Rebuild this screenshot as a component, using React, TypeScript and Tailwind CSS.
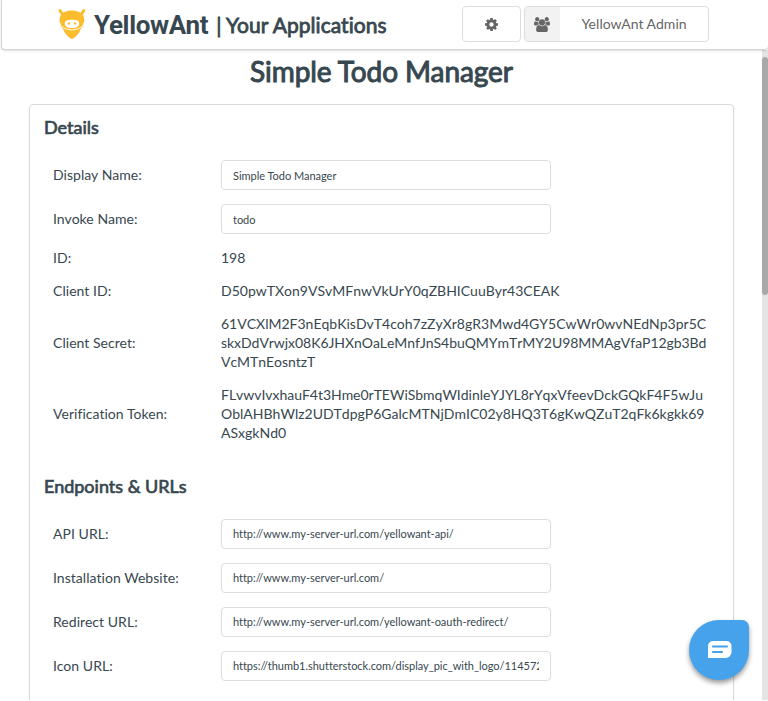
import type { ReactNode } from "react";

function AntLogo() {
  return (
    <svg className="h-[32px] w-[30px] shrink-0" viewBox="0 0 30 32">
      <g stroke="#fbbd2d" strokeLinecap="round">
        <path d="M2.900 2.400 L5.600 6.400" strokeWidth="2.800" />
        <path d="M26.900 2.400 L24.200 6.400" strokeWidth="2.800" />
      </g>
      <path
        d="M14.900 2.600c5.200 0 9.200 1.500 11.200 4.600 1.500 2.600 1.400 6.600.4 9.600-.6 1.700-1.500 2.900-2.600 3.700-1.300 4.500-4.300 7.700-7.600 9.900-.9.600-1.900.6-2.800 0-3.200-2.200-6.300-5.400-7.600-9.900-1.100-.8-2-2-2.600-3.700-1-3-1.100-7 .4-9.600 2-3.100 6-4.600 11.200-4.600z"
        fill="#fbbd2d"
      />
      <path d="M15 11.800c4.600 0 7.300.9 7.300 3.600 0 3-3.300 4.700-7.300 4.700s-7.300-1.700-7.300-4.700c0-2.700 2.700-3.600 7.300-3.600z" fill="#fff" />
      <circle cx="11.900" cy="15.400" r="1.200" fill="#fbbd2d" />
      <circle cx="18.100" cy="15.400" r="1.200" fill="#fbbd2d" />
      <path d="M2.800 14.500c1.600 9.800 22.600 9.800 24.200 0" fill="none" stroke="#fff" strokeWidth="0.900" />
    </svg>
  );
}

function CogIcon() {
  return (
    <svg className="size-[13px]" viewBox="0 -128 1536 1536" fill="currentColor">
      <path d="M1024 640q0-106-75-181t-181-75-181 75-75 181 75 181 181 75 181-75 75-181zm512-109v222q0 12-8 23t-20 13l-185 28q-19 54-39 91 35 50 107 138 10 12 10 25t-9 23q-27 37-99 108t-94 71q-12 0-26-9l-138-108q-44 23-91 38-16 136-29 186-7 28-36 28h-222q-14 0-24.500-8.500t-11.500-21.500l-28-184q-49-16-90-37l-141 107q-10 9-25 9-14 0-25-11-126-114-165-168-7-10-7-23 0-12 8-23 15-21 51-66.500t54-70.500q-27-50-41-99l-183-27q-13-2-21-12.500t-8-23.500v-222q0-12 8-23t19-13l186-28q14-46 39-92-40-57-107-138-10-12-10-24 0-10 9-23 26-36 98.500-107.500t94.500-71.500q13 0 26 10l138 107q44-23 91-38 16-136 29-186 7-28 36-28h222q14 0 24.500 8.500t11.500 21.500l28 184q49 16 90 37l142-107q9-9 24-9 13 0 25 10 129 119 165 170 7 8 7 22 0 12-8 23-15 21-51 66.500t-54 70.500q26 50 41 98l183 28q13 2 21 12.500t8 23.500z" />
    </svg>
  );
}

function UsersIcon() {
  return (
    <svg className="mr-[1px] h-[15px] w-[16px]" viewBox="0 0 1920 1792" fill="currentColor">
      <path d="M593 896q-162 5-265 128h-134q-82 0-138-40.500t-56-118.500q0-353 124-353 6 0 43.500 21t97.500 42.500 119 21.500q67 0 133-23-5 37-5 66 0 139 81 256zm1071 637q0 120-73 189.500t-194 69.500h-874q-121 0-194-69.500t-73-189.500q0-53 3.500-103.500t14-109 26.500-108.500 43-97.500 62-81 85.500-53.500 111.500-20q10 0 43 21.500t73 48 107 48 135 21.500 135-21.500 107-48 73-48 43-21.500q61 0 111.500 20t85.500 53.500 62 81 43 97.500 26.500 108.500 14 109 3.500 103.500zm-1024-1277q0 106-75 181t-181 75-181-75-75-181 75-181 181-75 181 75 75 181zm704 384q0 159-112.500 271.500t-271.500 112.500-271.500-112.500-112.500-271.500 112.500-271.500 271.500-112.500 271.500 112.500 112.500 271.500zm576 225q0 78-56 118.500t-138 40.500h-134q-103-123-265-128 81-117 81-256 0-29-5-66 66 23 133 23 59 0 119-21.500t97.500-42.500 43.500-21q124 0 124 353zm-128-609q0 106-75 181t-181 75-181-75-75-181 75-181 181-75 181 75 75 181z" />
    </svg>
  );
}

function Row({ label, children }: { label: string; children: ReactNode }) {
  return (
    <div className="flex items-center py-[7px] pl-[23px]">
      <div className="w-[168px] shrink-0 tracking-[0.04px]">{label}</div>
      <div className="min-w-0 [font-kerning:none] [font-variant-ligatures:none]">{children}</div>
    </div>
  );
}

function Field({ label, value, inputClass = "" }: { label: string; value: string; inputClass?: string }) {
  return (
    <div className="flex h-[44px] items-center pl-[23px]">
      <div className="w-[168px] shrink-0 pb-[2px] tracking-[0.04px]">{label}</div>
      <input
        readOnly
        aria-label={label}
        defaultValue={value}
        className={`block h-[30px] w-[330px] rounded-[4px] border border-[#dcddde] bg-white px-[11px] text-[11px] tracking-[-0.025px] text-[#37474f] outline-none ${inputClass}`}
      />
    </div>
  );
}

function SectionTitle({ children }: { children: ReactNode }) {
  return (
    <h2 className="pl-[14px] text-[18px] leading-[20px] font-normal [font-variant-ligatures:none] [-webkit-text-stroke:0.7px_#37474f]">
      {children}
    </h2>
  );
}

export default function App() {
  return (
    <div className="relative flex h-[701px] w-[768px] flex-col overflow-hidden bg-white font-['Lato',sans-serif] text-[14px] leading-[19px] text-[#37474f]">
      <header className="z-10 ml-px flex h-[50px] shrink-0 items-start rounded-b-[4px] border-b border-l border-[#d4d4d5] bg-white shadow-[0_1px_2px_rgba(34,36,38,0.15)]">
        <div className="flex h-[48px] items-center pl-[55px]">
          <AntLogo />
          <span className="ml-[7px] pt-[2px] font-['Roboto',sans-serif] text-[26px] leading-[46px] font-bold tracking-[-0.35px]">
            YellowAnt
          </span>
          <span className="ml-[8px] pt-[2px] text-[21px] leading-[46px] tracking-[0.06px] whitespace-nowrap [-webkit-text-stroke:0.8px_#37474f]">
            | Your Applications
          </span>
        </div>
        <div className="mt-[6px] mr-[59px] ml-auto flex gap-[3px] text-[#666]">
          <button className="flex h-[36px] w-[59px] items-center justify-center rounded-[4px] border border-[#dcddde]">
            <CogIcon />
          </button>
          <button className="flex h-[36px] w-[185px] items-stretch overflow-hidden rounded-[4px] border border-[#dcddde]">
            <span className="flex w-[35px] items-center justify-center bg-[#f2f2f2]">
              <UsersIcon />
            </span>
            <span className="flex flex-1 items-center justify-center pb-[2px] text-[14px] tracking-[0.03px]">YellowAnt Admin</span>
          </button>
        </div>
      </header>

      <div className="flex h-[650px] shrink-0">
        <main className="flex w-[762px] flex-col overflow-hidden">
          <h1 className="mt-[3px] pl-[1px] text-center text-[28px] leading-[36px] font-normal tracking-[-0.08px] [-webkit-text-stroke:1px_#37474f]">
            Simple Todo Manager
          </h1>
          <section className="mt-[15px] ml-[29px] h-[620px] w-[705px] shrink-0 rounded-[4px] border border-[#d9dadb] pt-[12px] shadow-[0_1px_2px_rgba(34,36,38,0.1)]">
            <SectionTitle>Details</SectionTitle>
            <div className="mt-[16px]">
              <Field label="Display Name:" value="Simple Todo Manager" />
              <Field label="Invoke Name:" value="todo" />
              <Row label="ID:">198</Row>
              <Row label="Client ID:">D50pwTXon9VSvMFnwVkUrY0qZBHICuuByr43CEAK</Row>
              <Row label="Client Secret:">
                61VCXlM2F3nEqbKisDvT4coh7zZyXr8gR3Mwd4GY5CwWr0wvNEdNp3pr5C
                <br />
                <span className="tracking-[-0.05px]">skxDdVrwjx08K6JHXnOaLeMnfJnS4buQMYmTrMY2U98MMAgVfaP12gb3Bd</span>
                <br />
                <span className="tracking-[-0.05px]">VcMTnEosntzT</span>
              </Row>
              <Row label="Verification Token:">
                <span className="tracking-[-0.03px]">FLvwvIvxhauF4t3Hme0rTEWiSbmqWIdinleYJYL8rYqxVfeevDckGQkF4F5wJu</span>
                <br />
                OblAHBhWlz2UDTdpgP6GalcMTNjDmIC02y8HQ3T6gKwQZuT2qFk6kgkk69
                <br />
                ASxgkNd0
              </Row>
            </div>
            <div className="h-[27px]" />
            <SectionTitle>Endpoints &amp; URLs</SectionTitle>
            <div className="mt-[16px]">
              <Field label="API URL:" value="http://www.my-server-url.com/yellowant-api/" inputClass="pb-[2px]" />
              <Field label="Installation Website:" value="http://www.my-server-url.com/" inputClass="pb-[2px]" />
              <Field label="Redirect URL:" value="http://www.my-server-url.com/yellowant-oauth-redirect/" inputClass="pb-[2px]" />
              <Field label="Icon URL:" value="https://thumb1.shutterstock.com/display_pic_with_logo/1145720/" inputClass="pb-[2px]" />
            </div>
          </section>
        </main>
        <div className="w-[6px] bg-[#e4e4e4] pt-[7px]">
          <div className="h-[238px] rounded-[3px] bg-[#a9a9a9]" />
        </div>
      </div>

      <button className="absolute top-[620px] left-[689px] flex size-[60px] items-center justify-center rounded-[30px] rounded-tr-[7px] bg-[#46a2eb] shadow-[0_3px_5px_rgba(0,0,0,0.4)]">
        <svg className="mb-[1px] ml-[2px] h-[17px] w-[24px]" viewBox="0 0 24 17">
          <path d="M5 0h13.500a5 5 0 0 1 5 5v6a6 6 0 0 1-6 6H0V5a5 5 0 0 1 5-5z" fill="#fff" />
          <path d="M5 5.500h14M5 11h9" stroke="#46a2eb" strokeWidth="2.200" strokeLinecap="round" />
        </svg>
      </button>
    </div>
  );
}
